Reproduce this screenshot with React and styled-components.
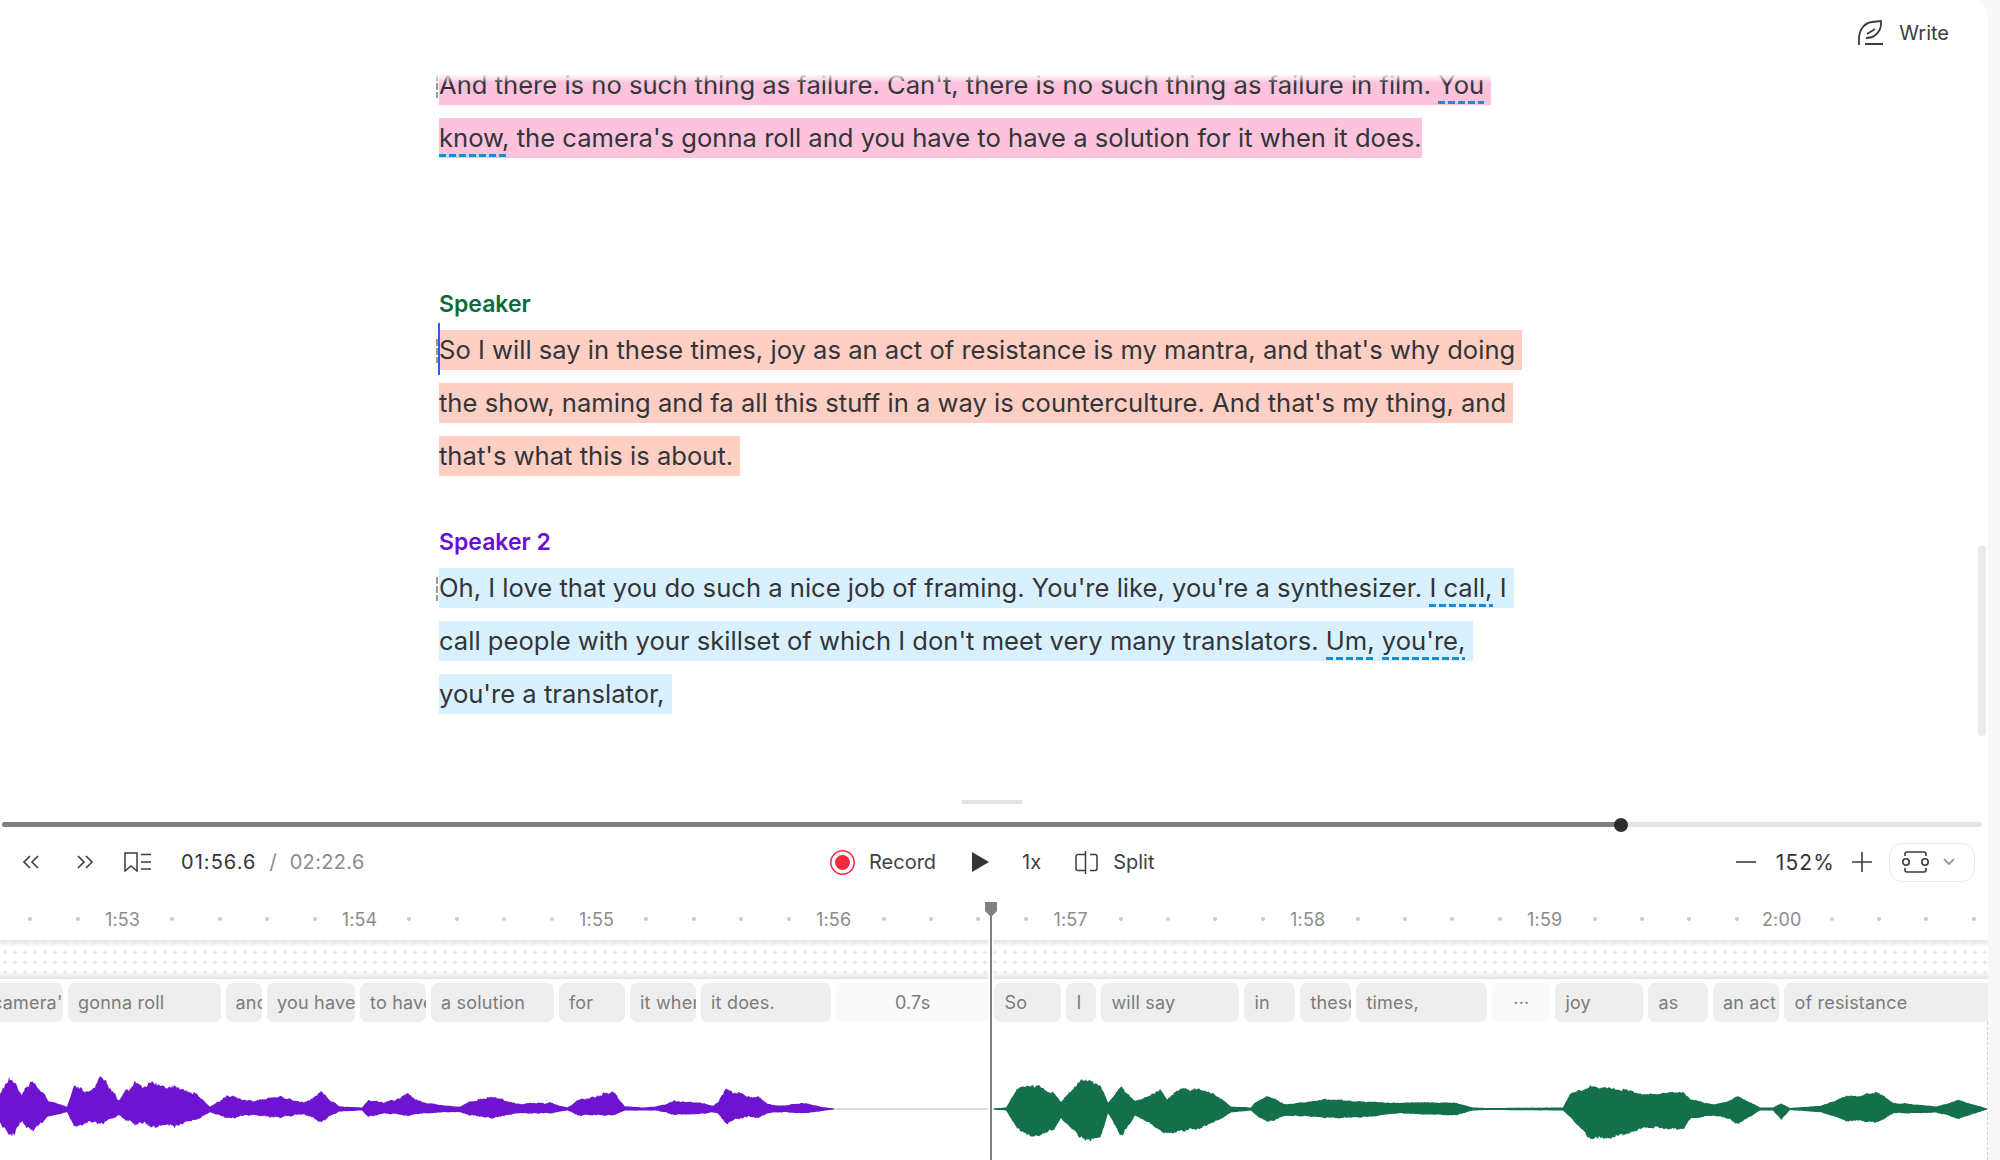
import styled, { createGlobalStyle } from "styled-components";

const GlobalStyle = createGlobalStyle`
  html, body {
    margin: 0;
    padding: 0;
    background: #f9f8f6;
  }
  body {
    font-family: "Inter", "Liberation Sans", sans-serif;
    color: #333538;
  }
`;

const Page = styled.div`
  width: 2000px;
  height: 1160px;
  overflow: hidden;
  background: #f9f8f6;
`;

const Main = styled.div`
  width: 1988px;
  height: 1160px;
  display: flex;
  flex-direction: column;
  background: #fff;
  border-top-right-radius: 16px;
  position: relative;
  overflow: hidden;
`;

const TopBar = styled.div`
  height: 74px;
  flex: none;
  display: flex;
  justify-content: flex-end;
  align-items: flex-start;
  padding: 20px 39px 0 0;
  box-sizing: border-box;
`;

const WriteButton = styled.div`
  display: flex;
  align-items: center;
  gap: 15px;
  height: 25px;
  font-size: 20px;
  color: #3a3c3f;
`;

const Editor = styled.div`
  height: 726px;
  flex: none;
  position: relative;
  overflow: hidden;
  padding-left: 439px;
  box-sizing: border-box;
`;

const Fade = styled.div`
  position: absolute;
  left: 0;
  right: 0;
  top: 0;
  height: 9px;
  background: linear-gradient(#fff, rgba(255, 255, 255, 0));
`;

const Content = styled.div`
  margin-top: -9px;
`;

const SpeakerName = styled.div`
  height: 40px;
  line-height: 42px;
  margin: ${(p) => p.$top}px 0 7px;
  font-size: 23px;
  font-weight: 600;
  color: ${(p) => p.$color};
`;

const Line = styled.div`
  position: relative;
  height: 53px;
  font-size: 25.6px;
  white-space: pre;
`;

const Highlight = styled.span`
  display: inline-block;
  height: 40px;
  line-height: 40px;
  background: ${(p) => p.$color};
`;

const Marked = styled.span`
  display: inline-block;
  height: 40px;
  background-image: linear-gradient(to right, #1a8cd8 7px, transparent 7px);
  background-size: 10px 3px;
  background-repeat: repeat-x;
  background-position: left bottom 1px;
`;

const Stub = styled.i`
  position: absolute;
  left: -3px;
  top: 9px;
  width: 2px;
  height: 24px;
  background: repeating-linear-gradient(#9a9a9a 0 7px, transparent 7px 9px);
`;

const Caret = styled.i`
  position: absolute;
  left: -1px;
  top: -7px;
  width: 2px;
  height: 52px;
  background: #2b5cff;
`;

const ScrollThumb = styled.div`
  position: absolute;
  right: 2px;
  top: 545px;
  width: 8px;
  height: 191px;
  border-radius: 4px;
  background: #ebebeb;
`;

const Bottom = styled.div`
  position: relative;
  flex: 1;
`;

const Handle = styled.div`
  width: 60px;
  height: 4px;
  margin: 0 auto 18px;
  transform: translateX(-2px);
  background: #e3e3e3;
`;

const Progress = styled.div`
  position: relative;
  height: 5px;
  margin: 0 6px 15px 2px;
  border-radius: 3px;
  background: #e4e4e4;
`;

const ProgressFill = styled.div`
  height: 100%;
  border-radius: 3px 0 0 3px;
  background: #808080;
`;

const Knob = styled.div`
  position: absolute;
  top: -4.5px;
  width: 14px;
  height: 14px;
  margin-left: -7px;
  border-radius: 50%;
  background: rgba(30, 30, 30, 0.92);
`;

const Toolbar = styled.div`
  height: 40px;
  display: grid;
  grid-template-columns: 830px 1fr auto;
  align-items: center;
  font-size: 20px;
`;

const LeftTools = styled.div`
  display: flex;
  align-items: center;
  padding-left: 22px;
`;

const IconSlot = styled.div`
  display: flex;
  width: ${(p) => p.$w}px;
`;

const Current = styled.span`
  margin-left: 3px;
  color: #333538;
  letter-spacing: 1.05px;
`;

const Slash = styled.span`
  margin: 0 13px;
  color: #8b8b8b;
`;

const Total = styled.span`
  color: #8b8b8b;
  letter-spacing: 0.35px;
`;

const CenterTools = styled.div`
  display: flex;
  align-items: center;
`;

const ToolLabel = styled.span`
  display: flex;
  margin-left: ${(p) => p.$gap}px;
  color: #404245;
`;

const RightTools = styled.div`
  display: flex;
  align-items: center;
  padding-right: 13px;
`;

const ZoomValue = styled.span`
  margin: 0 17px 0 20px;
  font-size: 21px;
  letter-spacing: 1.1px;
`;

const FitButton = styled.div`
  display: flex;
  align-items: center;
  gap: 14px;
  width: 86px;
  height: 39px;
  margin-left: 17px;
  padding-left: 12px;
  box-sizing: border-box;
  border: 1.5px solid #ebebeb;
  border-radius: 13px;
`;

const Ruler = styled.div`
  height: 38px;
  margin: 18px 0 2px;
  padding-left: 6.5px;
  display: flex;
  align-items: center;
  overflow: hidden;
`;

const RulerCell = styled.div`
  flex: none;
  width: 47.42px;
  display: flex;
  justify-content: center;
  align-items: center;
`;

const Dot = styled.i`
  width: 4px;
  height: 4px;
  border-radius: 50%;
  background: #cbcbcb;
`;

const RulerLabel = styled.span`
  margin-right: 5px;
  font-size: 18px;
  letter-spacing: 0.15px;
  color: #8c8c8c;
`;

const DotBand = styled.div`
  position: relative;
  height: 39px;
  overflow: hidden;
  svg {
    display: block;
  }
  &::before,
  &::after {
    content: "";
    position: absolute;
    left: 0;
    right: 0;
    height: 7px;
  }
  &::before {
    top: 0;
    background: linear-gradient(#e6e6e6, rgba(255, 255, 255, 0));
  }
  &::after {
    bottom: 0;
    background: linear-gradient(rgba(255, 255, 255, 0), #e4e4e4);
  }
`;

const Chips = styled.div`
  display: flex;
  gap: 5px;
  height: 39px;
  margin-top: 4px;
  overflow: hidden;
`;

const Chip = styled.div`
  flex: none;
  width: ${(p) => p.$w}px;
  margin-left: ${(p) => p.$ml || 0}px;
  box-sizing: border-box;
  padding-left: ${(p) => (p.$gapChip ? 0 : 10)}px;
  border-radius: 7px;
  overflow: hidden;
  white-space: nowrap;
  line-height: 39px;
  font-size: 18px;
  letter-spacing: 0.2px;
  text-align: ${(p) => (p.$gapChip ? "center" : "left")};
  color: #7c7c7c;
  background: ${(p) => (p.$gapChip ? "#fafafa" : "#eeeeee")};
`;

const WaveArea = styled.div`
  height: 138px;
  position: relative;
  svg {
    display: block;
  }
`;

const EdgeLine = styled.div`
  position: absolute;
  right: 0;
  top: 0;
  bottom: 0;
  width: 0;
  border-right: 1.5px dashed #cfcfcf;
`;

const Playhead = styled.div`
  position: absolute;
  left: 985px;
  top: 102px;
  bottom: 0;
  width: 12px;
`;

const PlayheadLine = styled.div`
  position: absolute;
  left: 5px;
  top: 12px;
  bottom: 0;
  width: 2px;
  background: #808080;
  box-shadow: 0 0 0 1.5px #fff;
`;

const PlayheadCap = styled.svg`
  position: absolute;
  left: 0;
  top: 0;
`;

const paragraphs = [
  {
    color: "#fdc3dc",
    top: 0,
    lines: [
      { stub: true, parts: ["And there is no such thing as failure. Can't, there is no such thing as failure in film. ", { m: "You" }, " "] },
      { parts: [{ m: "know," }, " the camera's gonna roll and you have to have a solution for it when it does."] },
    ],
  },
  {
    name: "Speaker",
    nameColor: "#0b6b3e",
    nameTop: 112,
    color: "#ffcfc4",
    lines: [
      { stub: true, caret: true, parts: ["So I will say in these times, joy as an act of resistance is my mantra, and that's why doing "] },
      { parts: ["the show, naming and fa all this stuff in a way is counterculture. And that's my thing, and "] },
      { parts: ["that's what this is about. "] },
    ],
  },
  {
    name: "Speaker 2",
    nameColor: "#6a0fd6",
    nameTop: 32,
    color: "#d9f1ff",
    lines: [
      { stub: true, parts: ["Oh, I love that you do such a nice job of framing. You're like, you're a synthesizer. ", { m: "I call," }, " I "] },
      { parts: ["call people with your skillset of which I don't meet very many translators. ", { m: "Um," }, " ", { m: "you're," }, " "] },
      { parts: ["you're a translator, "] },
    ],
  },
];

const words = [
  { t: "camera'", w: 81, ml: -18 },
  { t: "gonna roll", w: 152.5 },
  { t: "and", w: 36.5 },
  { t: "you have", w: 88 },
  { t: "to have", w: 66 },
  { t: "a solution", w: 123 },
  { t: "for", w: 66 },
  { t: "it when", w: 66 },
  { t: "it does.", w: 130 },
  { t: "0.7s", w: 153.4, gap: true },
  { t: "So", w: 67 },
  { t: "I", w: 30 },
  { t: "will say", w: 138 },
  { t: "in", w: 51 },
  { t: "these", w: 51 },
  { t: "times,", w: 131 },
  { t: "···", w: 58, gap: true },
  { t: "joy", w: 88 },
  { t: "as", w: 59.5 },
  { t: "an act", w: 66.5 },
  { t: "of resistance", w: 216 },
];

const rulerLabels = { 2: "1:53", 7: "1:54", 12: "1:55", 17: "1:56", 22: "1:57", 27: "1:58", 32: "1:59", 37: "2:00" };

// x, amplitude above, amplitude below the center line
const purpleWave = [
  [0,16,14],[9,30,26],[22,16,14],[33,32,24],[47,9,8],[67,2,3],[74,27,21],[85,17,14],[103,32,14],[118,9,6],
  [134,27,16],[170,24,18],[196,16,11],[210,2,3],[228,12,8],[254,8,6],[281,12,8],[304,5,4],[321,16,12],[339,2,2],
  [362,1,1],[368,9,8],[384,6,4],[408,14,6],[424,6,4],[460,2,3],[469,7,6],[491,11,8],[522,5,4],[549,6,4],
  [567,1,1],[580,9,6],[612,17,6],[625,2,1],[643,1,1],[656,2,1],[674,7,5],[700,5,4],[713,3,3],[718,6,4],
  [727,18,13],[745,13,7],[758,11,8],[767,5,4],[780,3,3],[803,6,4],[820,2,2],[834,0,0],
];

const greenWave = [
  [992,0,0],[1006,1,1],[1017,19,18],[1033,24,28],[1053,16,21],[1061,6,8],[1080,29,29],[1100,24,29],[1108,6,4],
  [1122,21,26],[1135,7,6],[1160,19,21],[1167,9,24],[1180,21,23],[1213,16,14],[1231,2,3],[1251,1,1],[1254,5,4],
  [1267,14,14],[1285,4,6],[1325,9,8],[1361,7,8],[1400,6,4],[1457,6,6],[1473,1,1],[1488,0.5,0.5],
  [1553,1,1],[1563,1,1],[1570,16,8],[1588,22,29],[1610,21,29],[1645,14,18],[1683,16,19],[1691,9,9],[1714,4,6],
  [1739,12,14],[1760,1,1],[1773,1,1],[1781,5,10],[1790,0.5,0.5],[1821,3,3],[1846,12,11],[1875,17,14],[1894,6,4],
  [1936,2,3],[1959,9,10],[1987,0,0],
];

const CENTER_Y = 87;

// repeatable pseudo random 0..1 for a whole number
const rand = (n) => {
  const v = Math.sin(n * 127.1 + 11.7) * 43758.5453;
  return v - Math.floor(v);
};

const smoothNoise = (x, period) => {
  const i = Math.floor(x / period);
  const k = x / period - i;
  return rand(i) + (rand(i + 1) - rand(i)) * k;
};

const buildWave = (points, roughness) => {
  const top = [];
  const bottom = [];
  const gain = 1 / (1 - roughness * 0.62);
  let seg = 0;
  const start = points[0][0];
  const end = points[points.length - 1][0];
  for (let x = start; x <= end; x++) {
    while (seg < points.length - 2 && x > points[seg + 1][0]) seg++;
    const [x0, a0, b0] = points[seg];
    const [x1, a1, b1] = points[seg + 1];
    const k = (x - x0) / (x1 - x0);
    const body = 1 - roughness * 0.6 * smoothNoise(x, 5) - roughness * 0.4 * smoothNoise(x + 40, 17);
    const upper = gain * body * (1 - roughness * 0.4 * rand(x));
    const lower = gain * body * (1 - roughness * 0.4 * rand(x + 500));
    top.push(`${x} ${(CENTER_Y - (a0 + (a1 - a0) * k) * upper - 0.5).toFixed(1)}`);
    bottom.unshift(`${x} ${(CENTER_Y + (b0 + (b1 - b0) * k) * lower + 0.5).toFixed(1)}`);
  }
  return `M${top.concat(bottom).join("L")}Z`;
};

const Back = () => (
  <svg width="18" height="14" viewBox="0 0 18 14" fill="none" stroke="#3a3c3f" strokeWidth="1.6">
    <path d="M8 1 2 7l6 6M16 1l-6 6 6 6" />
  </svg>
);

const Forward = () => (
  <svg width="18" height="14" viewBox="0 0 18 14" fill="none" stroke="#3a3c3f" strokeWidth="1.6">
    <path d="m2 1 6 6-6 6M10 1l6 6-6 6" />
  </svg>
);

const BookmarkList = () => (
  <svg width="28" height="20" viewBox="0 0 28 20" fill="none" stroke="#3a3c3f" strokeWidth="1.5">
    <path d="M1 1h12v18l-6-5-6 5zM17 2.5h10M17 10h10M17 17h10" />
  </svg>
);

const RecordIcon = () => (
  <svg width="25" height="25" viewBox="0 0 25 25">
    <circle cx="12.5" cy="12.5" r="11.7" fill="none" stroke="#f5283c" strokeWidth="1.5" />
    <circle cx="12.5" cy="12.5" r="7.5" fill="#f5283c" />
  </svg>
);

const PlayIcon = () => (
  <svg width="17" height="20" viewBox="0 0 17 20">
    <path d="M0 0 17 10 0 20z" fill="#333538" />
  </svg>
);

const SplitIcon = () => (
  <svg width="23" height="23" viewBox="0 0 23 23" fill="none" stroke="#3a3c3f" strokeWidth="1.5">
    <path d="M10 3.5H3a2 2 0 0 0-2 2v12a2 2 0 0 0 2 2h7M10.5 0v23M15 3.5h5a2 2 0 0 1 2 2v12a2 2 0 0 1-2 2h-5" />
  </svg>
);

const MinusIcon = () => (
  <svg width="20" height="20" viewBox="0 0 20 20" stroke="#3a3c3f" strokeWidth="1.6">
    <path d="M0 10h20" />
  </svg>
);

const PlusIcon = () => (
  <svg width="20" height="20" viewBox="0 0 20 20" stroke="#3a3c3f" strokeWidth="1.6">
    <path d="M0 10h20M10 0v20" />
  </svg>
);

const FitIcon = () => (
  <svg width="27" height="22" viewBox="0 0 27 22" fill="none" stroke="#3a3c3f" strokeWidth="1.6">
    <path d="M3 5V3a2 2 0 0 1 2-2h17a2 2 0 0 1 2 2v2M3 17v2a2 2 0 0 0 2 2h17a2 2 0 0 0 2-2v-2" />
    <circle cx="4" cy="11" r="3.2" />
    <circle cx="23" cy="11" r="3.2" />
  </svg>
);

const ChevronIcon = () => (
  <svg width="12" height="8" viewBox="0 0 12 8" fill="none" stroke="#8a8a8a" strokeWidth="1.6">
    <path d="m1 1 5 5 5-5" />
  </svg>
);

const QuillIcon = () => (
  <svg width="26" height="25" viewBox="0 0 26 25" fill="none" stroke="#3a3c3f" strokeWidth="1.8">
    <path d="M1 25v-6C1 10 6 3 14 2l9-1c.5 6-2 12-7 15-2 1.5-5 2-8 2M9 14l8-5" />
    <path d="M7 24h18" strokeWidth="2" />
  </svg>
);

const PlayheadShape = () => (
  <PlayheadCap width="12" height="15" viewBox="0 0 12 15">
    <path d="M0 0h12v9l-6 6-6-6z" fill="#808080" />
  </PlayheadCap>
);

const WordsInLine = ({ line, color }) => (
  <Line>
    {line.stub && <Stub />}
    {line.caret && <Caret />}
    <Highlight $color={color}>
      {line.parts.map((part, i) =>
        typeof part === "string" ? part : <Marked key={i}>{part.m}</Marked>
      )}
    </Highlight>
  </Line>
);

const App = () => (
  <Page>
    <GlobalStyle />
    <Main>
      <TopBar>
        <WriteButton>
          <QuillIcon />
          Write
        </WriteButton>
      </TopBar>
      <Editor>
        <Content>
          {paragraphs.map((para, i) => (
            <div key={i}>
              {para.name && (
                <SpeakerName $color={para.nameColor} $top={para.nameTop}>
                  {para.name}
                </SpeakerName>
              )}
              {para.lines.map((line, j) => (
                <WordsInLine key={j} line={line} color={para.color} />
              ))}
            </div>
          ))}
        </Content>
        <Fade />
      </Editor>
      <Bottom>
        <Handle />
        <Progress>
          <ProgressFill style={{ width: "81.77%" }} />
          <Knob style={{ left: "81.77%" }} />
        </Progress>
        <Toolbar>
          <LeftTools>
            <IconSlot $w={54}><Back /></IconSlot>
            <IconSlot $w={48}><Forward /></IconSlot>
            <IconSlot $w={54}><BookmarkList /></IconSlot>
            <Current>01:56.6</Current>
            <Slash>/</Slash>
            <Total>02:22.6</Total>
          </LeftTools>
          <CenterTools>
            <RecordIcon />
            <ToolLabel $gap={14}>Record</ToolLabel>
            <ToolLabel $gap={36}><PlayIcon /></ToolLabel>
            <ToolLabel $gap={33}>1x</ToolLabel>
            <ToolLabel $gap={34}><SplitIcon /></ToolLabel>
            <ToolLabel $gap={15}>Split</ToolLabel>
          </CenterTools>
          <RightTools>
            <MinusIcon />
            <ZoomValue>152%</ZoomValue>
            <PlusIcon />
            <FitButton>
              <FitIcon />
              <ChevronIcon />
            </FitButton>
          </RightTools>
        </Toolbar>
        <Ruler>
          {Array.from({ length: 42 }, (_, i) => (
            <RulerCell key={i}>
              {rulerLabels[i] ? <RulerLabel>{rulerLabels[i]}</RulerLabel> : <Dot />}
            </RulerCell>
          ))}
        </Ruler>
        <DotBand>
          <svg width="1988" height="39">
            <defs>
              <pattern id="plus" width="10" height="10.2" patternUnits="userSpaceOnUse" x="0" y="-3">
                <path d="M3 5h4M5 3v4" stroke="#e2e2e2" strokeWidth="1" />
              </pattern>
            </defs>
            <rect width="1988" height="39" fill="url(#plus)" />
          </svg>
        </DotBand>
        <Chips>
          {words.map((word) => (
            <Chip key={word.t} $w={word.w} $ml={word.ml} $gapChip={word.gap}>
              {word.t}
            </Chip>
          ))}
        </Chips>
        <WaveArea>
          <svg width="1988" height="138">
            <path d="M0 87h1988" stroke="#cfcfcf" strokeWidth="1.5" />
            <path d="M1515 87l4-1 3 2 4-2 3 1 4-2 3 3 4-2 3 1 4-1 3 1" fill="none" stroke="#d6d6d6" strokeWidth="1.5" />
            <path d={buildWave(purpleWave, 0.4)} fill="#6e14d0" />
            <path d={buildWave(greenWave, 0.25)} fill="#14704a" />
          </svg>
          <EdgeLine />
        </WaveArea>
        <Playhead>
          <PlayheadLine />
          <PlayheadShape />
        </Playhead>
      </Bottom>
      <ScrollThumb />
    </Main>
  </Page>
);

export default App;
